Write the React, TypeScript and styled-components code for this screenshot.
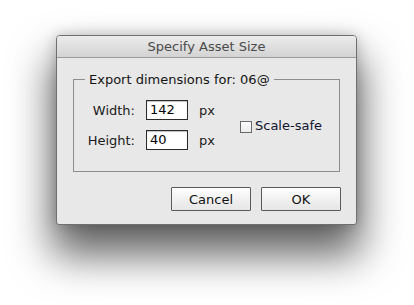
import React from 'react';
import styled, { createGlobalStyle } from 'styled-components';

const GlobalStyle = createGlobalStyle`
  html, body {
    margin: 0;
    padding: 0;
    background: #ffffff;
  }
  body {
    font-family: "DejaVu Sans", "Liberation Sans", sans-serif;
  }
`;

const Stage = styled.div`
  width: 414px;
  height: 305px;
  padding: 35px 0 0 56px;
  box-sizing: border-box;
  overflow: hidden;
`;

const Window = styled.div`
  width: 301px;
  height: 190px;
  box-sizing: border-box;
  background: #e8e8e8;
  border: 1px solid #6f6f6f;
  border-radius: 4px 4px 3px 3px;
  box-shadow: 0 26px 42px 4px rgba(0, 0, 0, 0.62), 0 0 14px rgba(0, 0, 0, 0.2);
  display: flex;
  flex-direction: column;
  overflow: hidden;
`;

const TitleBar = styled.div`
  height: 21px;
  flex: none;
  display: flex;
  align-items: center;
  justify-content: center;
  background: linear-gradient(#ececec, #d3d3d3);
  border-bottom: 1px solid #9c9c9c;
  font-size: 13px;
  color: #4a4a4a;
`;

const Body = styled.div`
  flex: 1;
  display: flex;
  flex-direction: column;
  padding: 14px 16px 13px 16px;
`;

const Group = styled.fieldset`
  margin: 0;
  padding: 13px 0 0 0;
  border: 1px solid #8d8d8d;
  height: 100px;
  box-sizing: border-box;
  display: grid;
  grid-template-columns: 61px 42px 14px auto;
  grid-template-rows: 20px 20px;
  align-content: start;
  column-gap: 11px;
  row-gap: 10px;
  align-items: center;
`;

const Legend = styled.legend`
  margin-left: 11px;
  padding: 0 4px;
  font-size: 13px;
  color: #141414;
`;

const Label = styled.span`
  font-size: 13px;
  color: #1a1a1a;
  text-align: right;
`;

const Field = styled.div`
  height: 20px;
  box-sizing: border-box;
  border: 1px solid #2b2b2b;
  background: #ffffff;
  box-shadow: inset 0 1px 1px rgba(0, 0, 0, 0.25);
  font-size: 13px;
  color: #000;
  padding: 1px 0 0 3px;
  line-height: 16px;
`;

const Unit = styled.span`
  font-size: 13px;
  color: #1a1a1a;
`;

const CheckArea = styled.label`
  grid-column: 4;
  grid-row: 1 / span 2;
  display: flex;
  align-items: center;
  gap: 3px;
  margin-left: 16px;
  font-size: 13px;
  color: #0f1430;
`;

const Box = styled.span`
  width: 12px;
  height: 12px;
  box-sizing: border-box;
  border: 1px solid #6a6a6a;
  background: linear-gradient(#fdfdfd, #ececec);
  margin-top: 4px;
`;

const Actions = styled.div`
  margin-top: auto;
  display: flex;
  justify-content: flex-end;
  gap: 10px;
  margin-right: -1px;
`;

const Button = styled.button`
  width: 80px;
  height: 24px;
  box-sizing: border-box;
  border: 1px solid #5a5a5a;
  border-radius: 1px;
  background: linear-gradient(#ffffff, #f1f1f1 50%, #e6e6e6);
  font-family: "DejaVu Sans", "Liberation Sans", sans-serif;
  font-size: 13px;
  color: #111;
  padding: 0;
`;

export default function App() {
  return (
    <Stage>
      <GlobalStyle />
      <Window>
        <TitleBar>Specify Asset Size</TitleBar>
        <Body>
          <Group>
            <Legend>Export dimensions for: 06@</Legend>
            <Label>Width:</Label>
            <Field>142</Field>
            <Unit>px</Unit>
            <CheckArea>
              <Box />
              Scale-safe
            </CheckArea>
            <Label>Height:</Label>
            <Field>40</Field>
            <Unit>px</Unit>
          </Group>
          <Actions>
            <Button>Cancel</Button>
            <Button>OK</Button>
          </Actions>
        </Body>
      </Window>
    </Stage>
  );
}
